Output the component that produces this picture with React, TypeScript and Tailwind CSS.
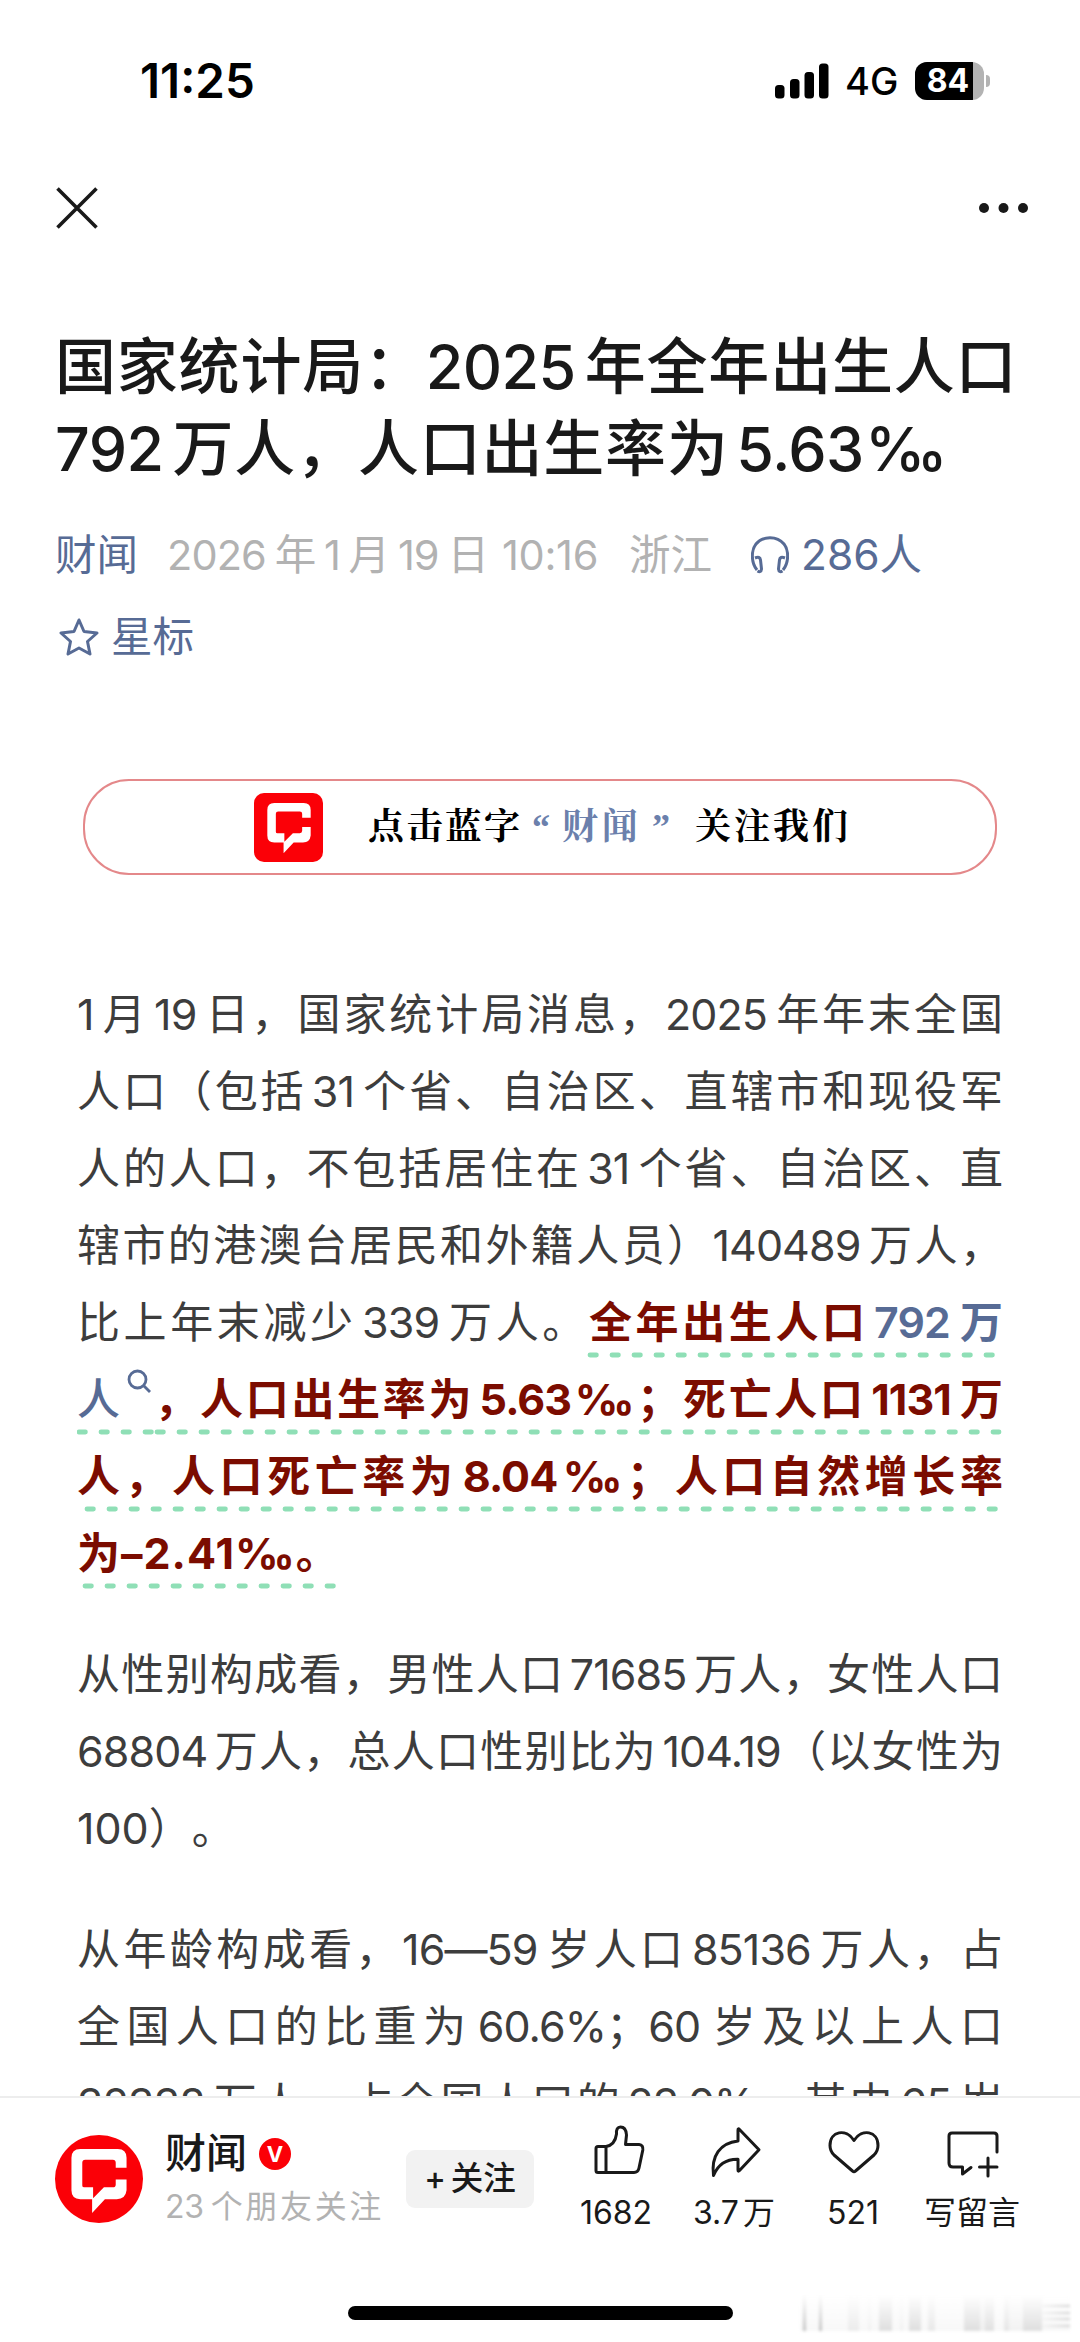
import type { ReactNode } from "react";

type LineProps = {
  children: ReactNode;
  justify?: boolean;
};

function Line({ children, justify = true }: LineProps) {
  return (
    <div
      className={`relative h-[77px] w-[925px] whitespace-nowrap leading-[77px] ${
        justify ? "tracking-[-0.9px] [text-align-last:justify]" : ""
      }`}
    >
      {children}
    </div>
  );
}

// Dashed underline of the highlighted sentence, hung below one text line.
function Underline({ start, end }: { start: number; end: number }) {
  return (
    <svg className="absolute bottom-[2px] left-0 h-2 w-[930px]" viewBox="0 0 930 8" fill="none" aria-hidden>
      <path
        d={`M${start + 2} 4H${end}`}
        stroke="#8fdfb6"
        strokeWidth="4.8"
        strokeLinecap="round"
        strokeDasharray="6.4 15.6"
      />
    </svg>
  );
}

function LogoMark({ className }: { className: string }) {
  return (
    <svg viewBox="0 0 56 62" className={className} aria-hidden>
      <path
        d="M56 19V9Q56 0 47 0H9Q0 0 0 9V42Q0 51 9 51H21V65L34 51H46Q55 51 56 42V31H45V36Q45 39 42 39H33L22 50V39H13Q11 39 11 37V14Q11 11 14 11H42Q45 11 45 14V19Z"
        fill="#fff"
      />
    </svg>
  );
}

function StatusBar() {
  return (
    <div className="flex h-[160px] items-start justify-between pl-[140px] pr-[90px] pt-[56px]">
      <div className="text-[47.5px] font-semibold leading-[50px] text-black">11:25</div>
      <div className="flex h-[50px] items-center">
        <svg viewBox="0 0 54 36" className="h-[36px] w-[54px]" aria-hidden>
          <rect x="0" y="22" width="9.5" height="13.5" rx="3.5" />
          <rect x="15" y="16" width="9.5" height="19.5" rx="3.5" />
          <rect x="29.5" y="9" width="9.5" height="26.5" rx="3.5" />
          <rect x="44" y="0.5" width="9.5" height="35" rx="3.5" />
        </svg>
        <span className="ml-[16px] w-[51px] text-[38px] font-medium leading-[50px] text-black">4G</span>
        <div className="ml-[19px] flex items-center">
          <div className="flex h-[38px] w-[69px] overflow-hidden rounded-[12px] bg-[#b3b3b3]">
            <div className="w-[58px] bg-black pl-[8px] text-center text-[32px] font-bold leading-[38px] text-white">
              84
            </div>
          </div>
          <div className="ml-[2px] h-[12px] w-[4px] rounded-r-full bg-[#b3b3b3]" />
        </div>
      </div>
    </div>
  );
}

function Toolbar() {
  return (
    <div className="flex h-[96px] items-center justify-between pl-[56px] pr-[51px]">
      <svg viewBox="0 0 42 42" className="h-[42px] w-[42px]" fill="none" stroke="#191919" strokeWidth="3.6" aria-hidden>
        <path d="M1.5 1.5L40.5 40.5M40.5 1.5L1.5 40.5" />
      </svg>
      <svg viewBox="0 0 50 10" className="h-[10px] w-[50px]" fill="#191919" aria-hidden>
        <circle cx="5" cy="5" r="5" />
        <circle cx="24.5" cy="5" r="5" />
        <circle cx="44" cy="5" r="5" />
      </svg>
    </div>
  );
}

function ArticleHeader() {
  return (
    <header className="pl-[55px] pt-[70px]">
      <h1 className="text-[61px] font-medium leading-[82px] tracking-[-0.6px] text-[#191919]">
        <div className="h-[82px] w-[961px] whitespace-nowrap [text-align-last:justify]">
          国家统计局：2025年全年出生人口
        </div>
        <div className="h-[82px] w-[892px] whitespace-nowrap [text-align-last:justify]">
          792万人，人口出生率为5.63‰
        </div>
      </h1>
      <div className="mt-[24px] flex h-[82px] items-center whitespace-nowrap text-[41.5px] leading-[82px] text-[#b2b2b2]">
        <span className="w-[84px] text-[#576b95]">财闻</span>
        <span className="ml-[28px] w-[321px] tracking-[-0.9px] [text-align-last:justify]">2026年1月19日</span>
        <span className="ml-[14px] w-[99px] tracking-[-0.3px]">10:16</span>
        <span className="ml-[28px] w-[84px]">浙江</span>
        <svg
          viewBox="0 0 38 38"
          className="ml-[38px] h-[38px] w-[38px]"
          fill="none"
          stroke="#576b95"
          strokeWidth="3"
          strokeLinejoin="round"
          aria-hidden
        >
          <path d="M6 34C0 27 0 14 5 8C12-0.5 26-0.5 33 8C38 14 38 27 32 34" />
          <path d="M4 22Q9 20 9.5 24L10.5 33Q10 37 6.5 35M34 22Q29 20 28.5 24L27.5 33Q28 37 31.5 35" />
        </svg>
        <span className="ml-[12px] text-[42.5px] text-[#576b95] [text-autospace:no-autospace]">286人</span>
      </div>
      <div className="flex h-[82px] items-center text-[41.5px] text-[#576b95]">
        <svg
          viewBox="0 0 40 40"
          className="ml-[4px] h-[40px] w-[40px]"
          fill="none"
          stroke="#576b95"
          strokeWidth="3"
          strokeLinejoin="round"
          aria-hidden
        >
          <path d="M20 3L25 14.5L38 16L28.5 24.5L31 37L20 31L9 37L11.5 24.5L2 16L15 14.5Z" />
        </svg>
        <span className="ml-[12px]">星标</span>
      </div>
    </header>
  );
}

function FollowBanner() {
  return (
    <div className="ml-[83px] mt-[101px] flex h-[96px] w-[914px] items-center whitespace-nowrap rounded-[46px] border-2 border-[#e4888a] font-['Liberation_Serif','Noto_Serif_CJK_SC','Noto_Sans_CJK_SC',serif] text-[36px] font-bold text-black">
      <div className="ml-[169px] flex h-[69px] w-[69px] items-center justify-center rounded-[10px] bg-[#fb0007]">
        <LogoMark className="h-[48px] w-[44px] overflow-visible" />
      </div>
      <span className="ml-[45px] w-[152px] [text-align-last:justify]">点击蓝字</span>
      <span className="ml-[12px] w-[18px] text-[#6b80ac]">“</span>
      <span className="ml-[12px] w-[76px] text-[#6b80ac] [text-align-last:justify]">财闻</span>
      <span className="ml-[14px] w-[18px] text-[#6b80ac]">”</span>
      <span className="ml-[25px] w-[153px] [text-align-last:justify]">关注我们</span>
    </div>
  );
}

function ArticleBody() {
  return (
    <article className="ml-[77px] mt-[101px] text-[43px] text-[#3d3d3d]">
      <Line>1月19日，国家统计局消息，2025年年末全国</Line>
      <Line>人口（包括31个省、自治区、直辖市和现役军</Line>
      <Line>人的人口，不包括居住在31个省、自治区、直</Line>
      <Line>辖市的港澳台居民和外籍人员）140489万人，</Line>
      <Line>
        比上年末减少339万人。
        <b className="text-[#7b0c00]">全年出生人口</b>
        <span className="font-semibold text-[#576b95]">792万</span>
        <Underline start={511} end={922} />
      </Line>
      <Line>
        <span className="font-medium text-[#576b95]">人</span>
        <svg
          viewBox="0 0 24 24"
          className="ml-[4px] inline-block h-[24px] w-[24px] -translate-y-[22px]"
          fill="none"
          stroke="#576b95"
          strokeWidth="2.8"
          aria-hidden
        >
          <circle cx="10.5" cy="10.5" r="8.5" />
          <path d="M16.5 16.5L23 23" />
        </svg>
        <b className="text-[#7b0c00]">，人口出生率为5.63‰；死亡人口1131万</b>
        <Underline start={0} end={80} />
        <Underline start={78} end={922} />
      </Line>
      <Line>
        <b className="text-[#7b0c00]">人，人口死亡率为8.04‰；人口自然增长率</b>
        <Underline start={8} end={922} />
      </Line>
      <Line justify={false}>
        <b className="tracking-[1px] text-[#7b0c00]">为–2.41‰。</b>
        <Underline start={6} end={258} />
      </Line>
      <div className="mt-[44px]">
        <Line>从性别构成看，男性人口71685万人，女性人口</Line>
        <Line>68804万人，总人口性别比为104.19（以女性为</Line>
        <Line justify={false}>100）。</Line>
      </div>
      <div className="mt-[44px]">
        <Line>从年龄构成看，16—59岁人口85136万人，占</Line>
        <Line>全国人口的比重为60.6%；60岁及以上人口</Line>
        <Line>32338万人，占全国人口的23.0%，其中65岁</Line>
      </div>
    </article>
  );
}

function Action({ label, className, children }: { label: string; className: string; children: ReactNode }) {
  return (
    <div className={`flex flex-col items-center ${className}`}>
      <svg
        viewBox="0 0 56 56"
        className="h-[56px] w-[56px] overflow-visible"
        fill="none"
        stroke="#191919"
        strokeWidth="3"
        strokeLinejoin="round"
        strokeLinecap="round"
        aria-hidden
      >
        {children}
      </svg>
      <span className="mt-[11px] whitespace-nowrap text-[32px] leading-[40px] text-[#191919]">{label}</span>
    </div>
  );
}

const smudges = [
  "ml-[3px] w-[3px] to-[#c4c4c4]",
  "ml-[13px] w-[3px] to-[#c4c4c4]",
  "ml-[26px] w-[11px] to-[#ebebeb]",
  "ml-[9px] w-[3px] to-[#f1f1f1]",
  "ml-[8px] w-[13px] to-[#dedede]",
  "ml-[8px] w-[3px] to-[#f1f1f1]",
  "ml-[6px] w-[12px] to-[#dedede]",
  "ml-[7px] w-[7px] to-[#e8e8e8]",
  "ml-[29px] w-[16px] to-[#dedede]",
  "w-[5px] to-[#efefef]",
  "w-[9px] to-[#e0e0e0]",
  "ml-[10px] w-[5px] to-[#e5e5e5]",
  "w-[14px] to-[#f2f2f2]",
  "w-[19px] to-[#dedede]",
];

function Smudge() {
  return (
    <div className="absolute bottom-[11px] right-[10px] flex h-[36px] w-[270px] bg-linear-to-b from-white to-[#f8f8f8] blur-[1.5px]" aria-hidden>
      {smudges.map((smudge, index) => (
        <div key={index} className={`shrink-0 bg-linear-to-b from-white ${smudge}`} />
      ))}
      <div className="mb-[4px] mt-[10px] flex flex-1 flex-col justify-between">
        <div className="h-[2px] bg-linear-to-r from-[#f4f4f4] to-[#cfcfcf]" />
        <div className="h-[2px] bg-linear-to-r from-[#f4f4f4] to-[#cfcfcf]" />
        <div className="h-[2px] bg-linear-to-r from-[#f4f4f4] to-[#cfcfcf]" />
        <div className="h-[2px] bg-linear-to-r from-[#f4f4f4] to-[#cfcfcf]" />
      </div>
    </div>
  );
}

function BottomBar() {
  return (
    <footer className="relative flex h-[246px] shrink-0 flex-col border-t-2 border-[#ededed] bg-white">
      <div className="flex h-[160px] pl-[55px]">
        <div className="mt-[37px] flex h-[88px] w-[88px] items-center justify-center rounded-full bg-[#fb0007]">
          <LogoMark className="h-[61px] w-[56px] overflow-visible" />
        </div>
        <div className="ml-[22px] mt-[29px] w-[216px] whitespace-nowrap">
          <div className="flex h-[54px] items-center text-[41px] font-medium text-[#191919]">
            财闻
            <span className="ml-[12px] flex h-[32px] w-[32px] items-center justify-center rounded-full bg-[#fb0007] text-[22px] font-bold text-white">
              V
            </span>
          </div>
          <div className="h-[52px] text-[32px] leading-[52px] tracking-[-0.3px] text-[#b2b2b2] [text-align-last:justify]">
            23个朋友关注
          </div>
        </div>
        <div className="ml-[25px] mt-[52px] flex h-[58px] w-[128px] items-center justify-center rounded-[9px] bg-[#f2f2f2] text-[32.5px] font-medium text-[#191919]">
          <span className="mr-[5px]">+</span>关注
        </div>
        <div className="ml-[23px] mt-[28px] flex">
          <Action label="1682" className="w-[118px]">
            <path d="M8 22.5Q8 20.5 10 20.5H18Q27 19 28.5 8Q28 1 32.5 1Q38 1 38.5 9L37.5 18.5H51Q55.5 19 54.8 24L51 42Q50 46.5 46 46.5H10Q8 46.5 8 44.5ZM18 20.5V46.5" />
          </Action>
          <Action label="3.7万" className="w-[118px]">
            <path d="M32 15V4Q32 2 33.5 3.5L53 23.7L33.5 44.5Q32 46 32 44V33.3C17 33 11 41 7.5 49.5C5 30 14 17 32 15Z" />
          </Action>
          <Action label="521" className="w-[120px]">
            <path d="M29 14.5C21 2 5 5 5 19.5C5 24 7 27 9 29L27.5 45Q29 46.5 30.5 45L49 29C51 27 53 24 53 19.5C53 5 37 2 29 14.5Z" />
          </Action>
          <Action label="写留言" className="w-[118px]">
            <path d="M53 26V10Q53 7 50 7H8Q5 7 5 10V37Q5 41 9 41H18.5V48L27 41.5M44 32V50M35.5 41H53" />
          </Action>
        </div>
      </div>
      <div className="mx-auto mt-[48px] h-[14px] w-[385px] rounded-full bg-black" />
      <Smudge />
    </footer>
  );
}

export default function App() {
  return (
    <div className="flex h-[2342px] w-[1080px] flex-col overflow-hidden bg-white font-[Inter,'Noto_Sans_CJK_SC',sans-serif] [text-autospace:normal] [text-spacing-trim:space-all]">
      <main className="min-h-0 flex-1 overflow-hidden">
        <StatusBar />
        <Toolbar />
        <ArticleHeader />
        <FollowBanner />
        <ArticleBody />
      </main>
      <BottomBar />
    </div>
  );
}
